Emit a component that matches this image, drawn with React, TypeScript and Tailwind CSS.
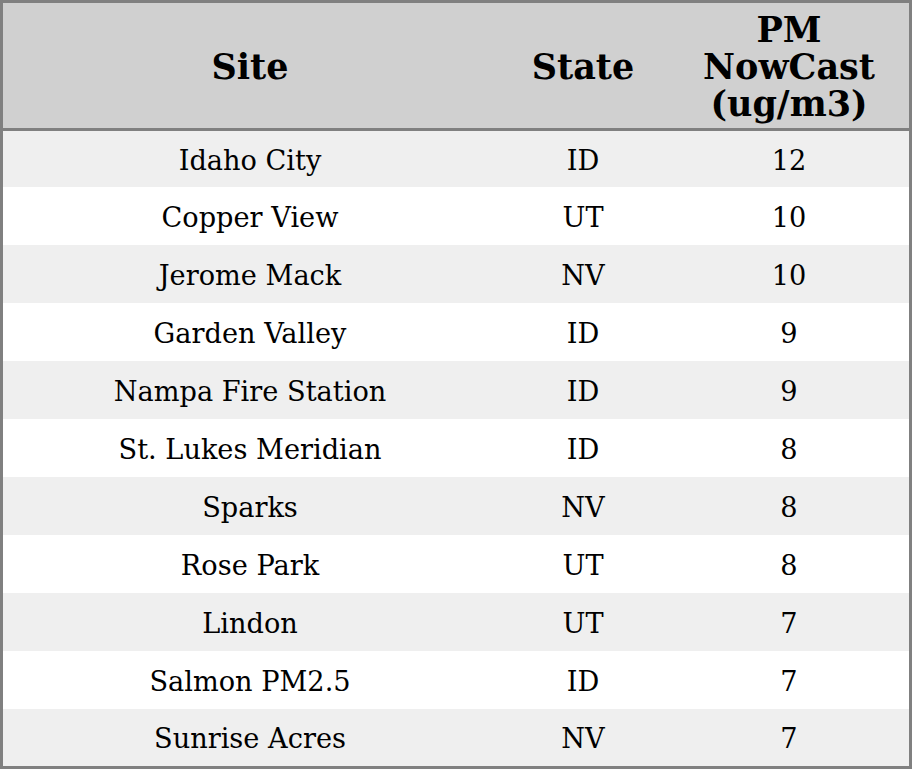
import React from "react";

const rows: [string, string, string][] = [
  ["Idaho City", "ID", "12"],
  ["Copper View", "UT", "10"],
  ["Jerome Mack", "NV", "10"],
  ["Garden Valley", "ID", "9"],
  ["Nampa Fire Station", "ID", "9"],
  ["St. Lukes Meridian", "ID", "8"],
  ["Sparks", "NV", "8"],
  ["Rose Park", "UT", "8"],
  ["Lindon", "UT", "7"],
  ["Salmon PM2.5", "ID", "7"],
  ["Sunrise Acres", "NV", "7"],
];

export default function App() {
  return (
    <div className="w-[912px] h-[769px] bg-white" style={{ fontFamily: '"DejaVu Serif", serif' }}>
      <div className="w-[912px] h-[769px] border-[3px] border-[#808080] flex flex-col">
        <div className="h-[128px] bg-[#d0d0d0] border-b-[3px] border-[#808080] grid grid-cols-[494px_172px_240px] items-center text-black font-bold text-[35px] leading-[37px] text-center">
          <div className="pt-[1px]">Site</div>
          <div className="pt-[1px]">State</div>
          <div className="pt-[1px]">
            PM
            <br />
            NowCast
            <br />
            (ug/m3)
          </div>
        </div>
        {rows.map((r, i) => (
          <div
            key={i}
            className={`grid grid-cols-[494px_172px_240px] items-center text-center text-[27.2px] text-black pt-[4px] ${
              i === 0 ? "h-[56px]" : i === rows.length - 1 ? "h-[57px]" : "h-[58px]"
            } ${i % 2 === 0 ? "bg-[#efefef]" : "bg-white"}`}
          >
            <div>{r[0]}</div>
            <div>{r[1]}</div>
            <div>{r[2]}</div>
          </div>
        ))}
      </div>
    </div>
  );
}
